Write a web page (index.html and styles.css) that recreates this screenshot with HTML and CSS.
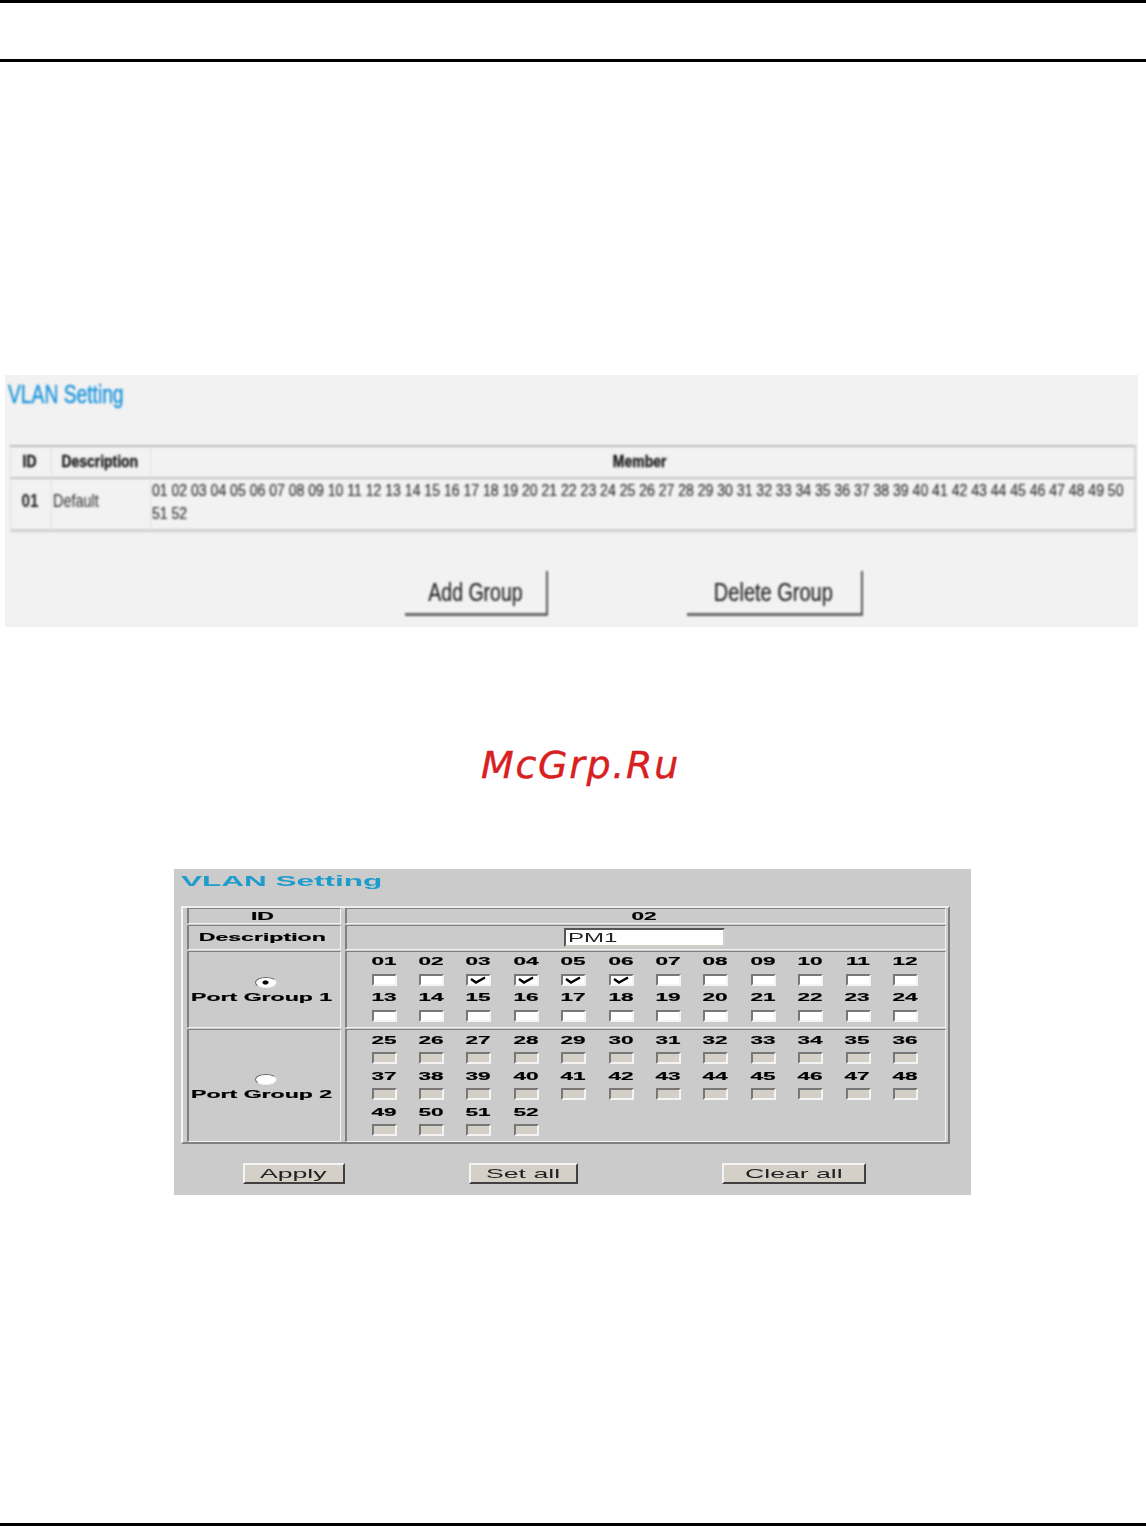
FILE: index.html
```html
<!DOCTYPE html>
<html lang="en">
<head>
<meta charset="utf-8">
<title>VLAN Setting</title>
<link rel="stylesheet" href="styles.css">
</head>
<body>
<div class="page">
  <header class="head-rule"></header>

  <section class="shot-a">
    <div class="a-blur">
      <h2 class="a-title"><span>VLAN Setting</span></h2>
      <div class="a-table">
        <div class="a-cell a-th"><span>ID</span></div>
        <div class="a-cell a-th"><span>Description</span></div>
        <div class="a-cell a-th a-th-member"><span>Member</span></div>
        <div class="a-cell a-id"><span>01</span></div>
        <div class="a-cell a-desc"><span>Default</span></div>
        <div class="a-cell a-members">
          <span>01 02 03 04 05 06 07 08 09 10 11 12 13 14 15 16 17 18 19 20 21 22 23 24 25 26 27 28 29 30 31 32 33 34 35 36 37 38 39 40 41 42 43 44 45 46 47 48 49 50</span>
          <span>51 52</span>
        </div>
      </div>
      <div class="a-actions">
        <button class="a-btn a-add" type="button"><span>Add Group</span></button>
        <button class="a-btn a-del" type="button"><span>Delete Group</span></button>
      </div>
    </div>
  </section>

  <div class="mark">McGrp.Ru</div>

  <section class="shot-b">
    <h2 class="b-title"><span>VLAN Setting</span></h2>
    <div class="b-table">
      <div class="b-cell b-row-id b-head b-col1"><span class="w">ID</span></div>
      <div class="b-cell b-row-id b-head b-col2"><span class="w">02</span></div>
      <div class="b-cell b-row-desc b-head b-col1"><span class="w">Description</span></div>
      <div class="b-cell b-row-desc b-center"><div class="b-input"><span class="t">PM1</span></div></div>

      <div class="b-cell b-group b-col1">
        <i class="radio on"></i>
        <span class="w">Port Group 1</span>
      </div>
      <div class="b-cell b-ports b-ports-1">
        <div class="port"><span class="w">01</span><i class="box"></i></div>
        <div class="port"><span class="w">02</span><i class="box"></i></div>
        <div class="port"><span class="w">03</span><i class="box"><svg viewBox="0 0 21 8"><path d="M3 3 L8 6.5 L17 1.5"/></svg></i></div>
        <div class="port"><span class="w">04</span><i class="box"><svg viewBox="0 0 21 8"><path d="M3 3 L8 6.5 L17 1.5"/></svg></i></div>
        <div class="port"><span class="w">05</span><i class="box"><svg viewBox="0 0 21 8"><path d="M3 3 L8 6.5 L17 1.5"/></svg></i></div>
        <div class="port"><span class="w">06</span><i class="box"><svg viewBox="0 0 21 8"><path d="M3 3 L8 6.5 L17 1.5"/></svg></i></div>
        <div class="port"><span class="w">07</span><i class="box"></i></div>
        <div class="port"><span class="w">08</span><i class="box"></i></div>
        <div class="port"><span class="w">09</span><i class="box"></i></div>
        <div class="port"><span class="w">10</span><i class="box"></i></div>
        <div class="port"><span class="w">11</span><i class="box"></i></div>
        <div class="port"><span class="w">12</span><i class="box"></i></div>
        <div class="port"><span class="w">13</span><i class="box"></i></div>
        <div class="port"><span class="w">14</span><i class="box"></i></div>
        <div class="port"><span class="w">15</span><i class="box"></i></div>
        <div class="port"><span class="w">16</span><i class="box"></i></div>
        <div class="port"><span class="w">17</span><i class="box"></i></div>
        <div class="port"><span class="w">18</span><i class="box"></i></div>
        <div class="port"><span class="w">19</span><i class="box"></i></div>
        <div class="port"><span class="w">20</span><i class="box"></i></div>
        <div class="port"><span class="w">21</span><i class="box"></i></div>
        <div class="port"><span class="w">22</span><i class="box"></i></div>
        <div class="port"><span class="w">23</span><i class="box"></i></div>
        <div class="port"><span class="w">24</span><i class="box"></i></div>
      </div>

      <div class="b-cell b-group b-group-2 b-col1">
        <i class="radio"></i>
        <span class="w">Port Group 2</span>
      </div>
      <div class="b-cell b-ports b-ports-2">
        <div class="port"><span class="w">25</span><i class="box off"></i></div>
        <div class="port"><span class="w">26</span><i class="box off"></i></div>
        <div class="port"><span class="w">27</span><i class="box off"></i></div>
        <div class="port"><span class="w">28</span><i class="box off"></i></div>
        <div class="port"><span class="w">29</span><i class="box off"></i></div>
        <div class="port"><span class="w">30</span><i class="box off"></i></div>
        <div class="port"><span class="w">31</span><i class="box off"></i></div>
        <div class="port"><span class="w">32</span><i class="box off"></i></div>
        <div class="port"><span class="w">33</span><i class="box off"></i></div>
        <div class="port"><span class="w">34</span><i class="box off"></i></div>
        <div class="port"><span class="w">35</span><i class="box off"></i></div>
        <div class="port"><span class="w">36</span><i class="box off"></i></div>
        <div class="port"><span class="w">37</span><i class="box off"></i></div>
        <div class="port"><span class="w">38</span><i class="box off"></i></div>
        <div class="port"><span class="w">39</span><i class="box off"></i></div>
        <div class="port"><span class="w">40</span><i class="box off"></i></div>
        <div class="port"><span class="w">41</span><i class="box off"></i></div>
        <div class="port"><span class="w">42</span><i class="box off"></i></div>
        <div class="port"><span class="w">43</span><i class="box off"></i></div>
        <div class="port"><span class="w">44</span><i class="box off"></i></div>
        <div class="port"><span class="w">45</span><i class="box off"></i></div>
        <div class="port"><span class="w">46</span><i class="box off"></i></div>
        <div class="port"><span class="w">47</span><i class="box off"></i></div>
        <div class="port"><span class="w">48</span><i class="box off"></i></div>
        <div class="port"><span class="w">49</span><i class="box off"></i></div>
        <div class="port"><span class="w">50</span><i class="box off"></i></div>
        <div class="port"><span class="w">51</span><i class="box off"></i></div>
        <div class="port"><span class="w">52</span><i class="box off"></i></div>
      </div>
    </div>
    <div class="b-actions">
      <button class="b-btn b-apply" type="button"><span class="t">Apply</span></button>
      <button class="b-btn b-set" type="button"><span class="t">Set all</span></button>
      <button class="b-btn b-clear" type="button"><span class="t">Clear all</span></button>
    </div>
  </section>

  <footer class="foot-rule"></footer>
</div>
</body>
</html>
```

FILE: styles.css
```css
* { box-sizing: border-box; }
html, body { margin: 0; padding: 0; background: #fff; }
body { font-family: "Liberation Sans", Arial, sans-serif; color: #000; }
.page { width: 1146px; height: 1526px; display: flex; flex-direction: column; overflow: hidden; }
.head-rule { height: 62px; border-top: 3px solid #000; border-bottom: 3px solid #000; flex: none; }
.foot-rule { height: 3px; background: #000; margin-top: auto; flex: none; }

/* first screenshot (light, blurred) */
.shot-a { flex: none; width: 1133px; height: 252px; margin: 313px 0 0 5px; background: #f2f2f2; overflow: hidden; }
.a-blur { filter: blur(1px); height: 100%; }
.a-title { margin: 0; height: 70px; padding: 5px 0 0 3px; font-size: 25px; line-height: 28px; font-weight: 400; color: #1f96dc; }
.a-title span { display: inline-block; transform: scaleX(.77); transform-origin: left center; -webkit-text-stroke: .5px #1f96dc; }
.a-table { margin-left: 5px; width: 1126px; height: 87px; display: grid; grid-template-columns: 41px 99px 986px; grid-template-rows: 30px 54px; border-top: 2px solid #bdbdbd; border-bottom: 3px solid #cfcfcf; border-right: 2px solid #d4d4d4; }
.a-cell { border-left: 1px solid #e2e2e2; display: flex; align-items: center; overflow: hidden; }
.a-cell:nth-child(n+4) { border-top: 2px solid #c4c4c4; }
.a-th { justify-content: center; padding: 0 3px 1px 0; font-size: 17px; font-weight: 700; color: #111; }
.a-th span { display: inline-block; transform: scaleX(.82); white-space: nowrap; -webkit-text-stroke: .3px #111; }
.a-th-member { padding-right: 8px; }
.a-id { justify-content: center; padding: 0 1px 7px 0; font-size: 18px; font-weight: 700; color: #222; }
.a-id span { display: inline-block; transform: scaleX(.85); }
.a-desc { font-size: 18px; color: #333; padding: 0 0 7px 1px; }
.a-desc span { display: inline-block; transform: scaleX(.8); transform-origin: left center; }
.a-members { flex-direction: column; align-items: flex-start; justify-content: flex-start; padding: 0 0 0 1px; font-size: 16px; line-height: 23px; color: #333; }
.a-members span { display: block; transform: scaleX(.878); transform-origin: left center; white-space: nowrap; -webkit-text-stroke: .2px #333; }
.a-actions { display: flex; margin-top: 39px; padding-left: 400px; }
.a-btn { height: 45px; background: transparent; border: 0; border-right: 2px solid #555; border-bottom: 3px solid #666; font-family: inherit; font-size: 25px; color: #222; padding: 0; display: flex; align-items: center; justify-content: center; }
.a-btn span { display: inline-block; transform: scaleX(.78); white-space: nowrap; -webkit-text-stroke: .2px #222; }
.a-add { width: 143px; }
.a-del { width: 176px; margin-left: 139px; padding-right: 1px; }
.a-del span { transform: scaleX(.8); }

/* watermark */
.mark { flex: none; height: 242px; padding-top: 114px; width: 1146px; padding-left: 15px; text-align: center; font-family: "DejaVu Sans", sans-serif; font-style: oblique; font-size: 38px; line-height: 48px; letter-spacing: 1.7px; color: #d7201f; -webkit-text-stroke: .4px #d7201f; }

/* second screenshot (gray form) */
.shot-b { flex: none; width: 797px; height: 326px; margin-left: 174px; background: #cbcbcb; }
.b-title { margin: 0; height: 37px; padding: 3px 0 0 7px; font-size: 14px; line-height: 18px; font-weight: 700; color: #1e9ccb; }
.b-title span { display: inline-block; transform: scaleX(2.25); transform-origin: left center; }
.b-table { margin-left: 7px; width: 769px; height: 238px; display: grid; grid-template-columns: 154px 601px; grid-template-rows: 16px 25px 77px 113px; column-gap: 4px; row-gap: 1px; padding: 0 0 0 4px; border: 2px solid; border-color: #eee #808080 #808080 #f4f4f4; }
.b-cell { border: 1px solid; border-color: #808080 #f4f4f4 #f4f4f4 #808080; border-left-width: 2px; }
.w { display: inline-block; transform: scaleX(2.05); font-size: 11px; font-weight: 700; line-height: 12px; white-space: nowrap; -webkit-text-stroke: .2px #000; }
.b-col1 .w { transform: scaleX(2.1); }
.t { display: inline-block; transform: scaleX(2.05); font-size: 13px; font-weight: 400; line-height: 14px; white-space: nowrap; }
.b-head { display: flex; align-items: center; justify-content: center; padding-bottom: 1px; }
.b-head.b-col1 { padding-right: 4px; }
.b-head.b-col2 { padding-right: 4px; }
.b-center { display: flex; align-items: center; padding-left: 217px; }
.b-input { width: 161px; height: 19px; background: #fff; border: 2px solid; border-color: #555 #d4d0c8 #d4d0c8 #555; padding-left: 2px; display: flex; align-items: center; }
.b-input .t { transform-origin: left center; font-size: 12px; transform: scaleX(2); color: #222; }
.b-group { display: flex; flex-direction: column; align-items: center; padding: 25px 5px 0 0; gap: 3px; }
.b-group-2 { padding-top: 44px; }
.radio { display: block; width: 22px; height: 11px; margin-left: 7px; border-radius: 50%; background: #fff; border: 1px solid; border-color: #666 #ddd #eee #666; position: relative; }
.radio.on::after { content: ""; position: absolute; left: 6px; top: 2px; width: 7px; height: 5px; border-radius: 50%; background: radial-gradient(ellipse, #000 45%, #ccc 70%, #fff); }
.b-ports { display: grid; grid-template-columns: repeat(12, 47.4px); grid-auto-rows: 36px; padding-left: 13px; align-content: start; }
.port { display: flex; flex-direction: column; align-items: center; justify-content: space-between; padding: 3px 0 1px; }
.port .w { height: 12px; }
.b-ports-2 .port .w { margin-top: 1px; }
.box { display: block; width: 25px; height: 12px; margin: 0 0 1px 1px; background: #fff; border: 2px solid; border-color: #777 #f4f4f4 #f4f4f4 #777; overflow: hidden; }
.box.off { background: #d4d0c8; }
.box svg { display: block; width: 21px; height: 8px; fill: none; stroke: #000; stroke-width: 2.4; }
.b-actions { display: flex; margin-top: 19px; padding-left: 69px; }
.b-btn { height: 21px; padding: 0; font-family: inherit; background: #d4d0c8; border: 2px solid; border-color: #f4f4f4 #404040 #404040 #f4f4f4; color: #222; display: flex; align-items: center; justify-content: center; }
.b-apply { width: 102px; padding-right: 1px; }
.b-set { width: 109px; margin-left: 124px; }
.b-clear { width: 144px; margin-left: 144px; }
```
